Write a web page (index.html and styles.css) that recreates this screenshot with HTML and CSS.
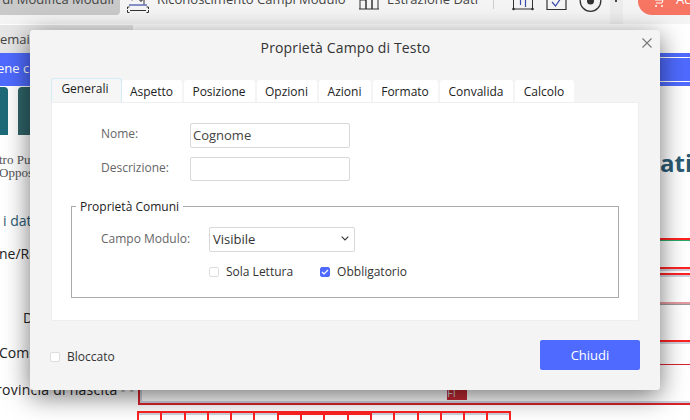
FILE: index.html
```html
<!DOCTYPE html>
<html lang="it">
<head>
<meta charset="utf-8">
<title>Proprietà Campo di Testo</title>
<link rel="stylesheet" href="styles.css">
</head>
<body>
<div class="app">
  <header class="toolbar">
    <div class="tool tool-active">di Modifica Moduli</div>
    <div class="tool tool-recog">
      <svg class="ticon" width="22" height="24" viewBox="0 0 22 24"><path d="M5 9.500V5h12v8.500M8 8h3M13 7h2v3h-2z" fill="none" stroke="#333"/><path d="M2 14h18" stroke="#3a4aa8" stroke-width="1.200"/><path d="M.5 18v-2h2M19.500 16h2v2M.5 19v2.500h2M19.500 21.500h2V19M3 19.500h16" fill="none" stroke="#333"/></svg>
      <span>Riconoscimento Campi Modulo</span>
    </div>
    <div class="tool tool-extract">
      <svg class="ticon" width="20" height="24" viewBox="0 0 20 24"><path d="M1 18V9h6v9M7 18V4h6v14M13 18V8h6v10M0 18h20" fill="none" stroke="#333"/></svg>
      <span>Estrazione Dati</span>
    </div>
    <div class="divider"></div>
    <svg class="sicon" width="22" height="24" viewBox="0 0 22 24"><path d="M1.500 2v16h19V2" fill="none" stroke="#333"/><circle cx="1.500" cy="18" r="1.300" fill="#333"/><circle cx="20.500" cy="18" r="1.300" fill="#333"/><path d="M8.500 6v8M13.500 8v8" stroke="#3a4aa8" stroke-width="1.200"/></svg>
    <svg class="sicon" width="21" height="24" viewBox="0 0 21 24"><path d="M1 2v16.500h19V2" fill="none" stroke="#333" stroke-width="1.200"/><path d="M6 11l3.500 4L15 7" fill="none" stroke="#3a4aa8" stroke-width="1.200"/></svg>
    <svg class="sicon last" width="23" height="24" viewBox="0 0 23 24"><circle cx="11.500" cy="10" r="10.300" fill="none" stroke="#333" stroke-width="1.300"/><circle cx="11.500" cy="10" r="3.500" fill="#333"/></svg>
    <div class="more"><span class="dot"></span></div>
    <div class="cta">
      <svg class="cart" width="10" height="8" viewBox="0 0 10 8"><path d="M1 0h8l-1 3H2" fill="none" stroke="#fff"/><circle cx="2" cy="6" r="1" fill="#fff"/><circle cx="8" cy="6" r="1" fill="#fff"/></svg>
      <span>Ac</span>
    </div>
  </header>

  <div class="doc" aria-hidden="true">
    <div class="frag email">email</div>
    <div class="banner"><span class="banner-text">ene c</span></div>
    <div class="logo l1"></div>
    <div class="logo l2"></div>
    <div class="frag serif s1">tro Pu</div>
    <div class="frag serif s2">Oppos</div>
    <div class="frag teal t1">i dat</div>
    <div class="frag lab f1">ne/Ra</div>
    <div class="frag lab f2">D</div>
    <div class="frag lab f3">Comu</div>
    <div class="frag lab f4">rovincia di nascita<span class="req"> * *</span></div>
    <div class="frag ati">ati</div>
    <div class="rline g r1"></div>
    <div class="rline r2"></div>
    <div class="rline r3"></div>
    <div class="rline p r4"></div>
    <div class="rline r5"></div>
    <div class="rline r6"></div>
    <div class="rline r7"></div>
    <div class="pbox"></div>
    <div class="pin">FI</div>
    <div class="cells">
      <i></i><i></i><i></i><i></i><i></i><i></i><i class="b"></i><i class="b"></i><i class="b"></i><i class="b"></i><i></i><i></i><i></i><i></i><i></i><i></i>
    </div>
  </div>

  <section class="modal">
    <div class="modal-head">
      <h1>Proprietà Campo di Testo</h1>
      <svg class="close" width="10" height="10" viewBox="0 0 10 10"><path d="M.5.500l9 9M9.500.500l-9 9" stroke="#777" stroke-width="1.100"/></svg>
    </div>
    <nav class="tabs">
      <div class="tab active">Generali</div>
      <div class="tab w60">Aspetto</div>
      <div class="tab w71">Posizione</div>
      <div class="tab w60">Opzioni</div>
      <div class="tab w52">Azioni</div>
      <div class="tab w65">Formato</div>
      <div class="tab w73">Convalida</div>
      <div class="tab w59">Calcolo</div>
    </nav>
    <div class="panel">
      <div class="row row-name">
        <label class="lbl">Nome:</label>
        <div class="input">Cognome</div>
      </div>
      <div class="row row-desc">
        <label class="lbl">Descrizione:</label>
        <div class="input short"></div>
      </div>
      <fieldset class="group">
        <legend>Proprietà Comuni</legend>
        <div class="row row-field">
          <label class="lbl lbl-field">Campo Modulo:</label>
          <div class="select">
            <span>Visibile</span>
            <svg width="8" height="5" viewBox="0 0 8 5"><path d="M.7.700L4 4l3.300-3.300" fill="none" stroke="#333" stroke-width="1.100"/></svg>
          </div>
        </div>
        <div class="row row-checks">
          <label class="check"><span class="box"></span>Sola Lettura</label>
          <label class="check check-on"><span class="box on"><svg width="8" height="6" viewBox="0 0 8 6"><path d="M1 3l2 2 4-4" fill="none" stroke="#fff" stroke-width="1.100"/></svg></span>Obbligatorio</label>
        </div>
      </fieldset>
    </div>
    <div class="modal-foot">
      <label class="check"><span class="box"></span>Bloccato</label>
      <button class="btn">Chiudi</button>
    </div>
  </section>
</div>
</body>
</html>
```
FILE: styles.css
```css
* { box-sizing: border-box; }
html, body { margin: 0; padding: 0; }
body { width: 690px; height: 420px; overflow: hidden; background: #fff; font-family: "Open Sans", sans-serif; }
.app { position: relative; width: 690px; height: 420px; overflow: hidden; }

.toolbar { position: relative; height: 48px; margin-top: -24px; background: #f4f4f4; display: flex; align-items: flex-start; font-size: 13px; color: #444; }
.tool { display: flex; align-items: flex-start; height: 48px; white-space: nowrap; line-height: 46px; flex: none; }
.tool-active { width: 120px; height: 39px; background: #c9c9c9; border-radius: 0 0 4px 0; justify-content: flex-end; padding-right: 6px; }
.tool-recog { margin-left: 7px; width: 230px; }
.tool-recog span { margin-left: 8px; }
.tool-extract { margin-left: 2px; width: 132px; }
.tool-extract span { margin-left: 8px; }
.ticon { margin-top: 15px; flex: none; }
.divider { width: 1px; height: 33px; background: #ccc; margin-left: 2px; margin-right: 18px; flex: none; }
.sicon { margin-top: 15px; margin-right: 12px; flex: none; }
.sicon.last { margin-right: 8px; }
.more { width: 13px; height: 48px; background: #ececec; position: relative; flex: none; }
.dot { position: absolute; left: 5px; top: 24px; width: 2px; height: 2px; background: #444; }
.cta { width: 80px; height: 39px; background: #f77563; border-radius: 0 0 0 14px; margin-left: 15px; color: #fff; position: relative; padding-left: 38px; line-height: 46px; flex: none; }
.cart { position: absolute; left: 16px; top: 24px; }

.doc { position: absolute; left: 0; top: 24px; right: 0; bottom: 0; background: #fff; }
.frag { position: absolute; white-space: nowrap; }
.email { left: -4px; top: 1px; font-size: 13px; color: #444; background: #e6e6e6; padding: 0 100px 0 4px; line-height: 28px; }
.banner { position: absolute; left: 0; right: 0; top: 29px; height: 33px; background: #4f6bff; }
.banner::after { content: ""; position: absolute; left: 660px; right: 0; top: 4px; height: 23px; border-top: 1px solid #fff; border-bottom: 1px solid #fff; }
.banner-text { position: absolute; left: -3px; top: 6px; color: #fff; font-size: 13px; }
.logo { position: absolute; top: 63px; height: 48px; background: #1e6a78; border-radius: 4px 4px 0 0; }
.l1 { left: -4px; width: 12px; }
.l2 { left: 18px; width: 24px; background: #2f6468; }
.serif { font-family: "Liberation Serif", serif; font-size: 13px; line-height: 12px; color: #555; }
.s1 { left: -1px; top: 130px; }
.s2 { left: -1px; top: 143px; }
.teal { color: #2a5b74; font-size: 14px; }
.t1 { left: 3px; top: 187px; }
.lab { color: #222; font-size: 14px; }
.f1 { left: -1px; top: 220px; }
.f2 { left: 23px; top: 284px; }
.f3 { left: -1px; top: 319px; }
.f4 { left: -4px; top: 356px; letter-spacing: .25px; }
.req { font-size: 10px; color: #888; }
.ati { left: 660px; top: 122px; color: #2a5b74; font-size: 24px; font-weight: 700; }
.rline { position: absolute; left: 660px; right: 0; height: 2px; background: #f22; box-shadow: 0 2px 0 #cfd2dc; }
.rline.g { box-shadow: 0 1px 0 #2aa868; }
.rline.p { background: #e39aa0; box-shadow: 0 1px 0 #999; }
.r1 { top: 214px; }
.r2 { top: 243px; }
.r3 { top: 249px; }
.r4 { top: 278px; }
.r5 { top: 316px; }
.r6 { top: 344px; }
.r7 { top: 351px; }
.pbox { position: absolute; left: 138px; right: -2px; top: 340px; height: 41px; background: #fff; border: 1px solid #d8232c; border-width: 1px 1px 2px 2px; box-shadow: inset 2px 0 0 #cfd2dc, inset 0 -2px 0 #cfd2dc; }
.pin { position: absolute; left: 447px; top: 364px; width: 20px; height: 12px; background: #c22a34; color: #ddd; font-size: 11px; line-height: 9px; }
.cells { position: absolute; left: 137px; top: 387px; display: flex; height: 20px; border-top: 2px solid #f22; box-shadow: inset 0 2px 0 #cfd2dc; }
.cells i { width: 23.300px; height: 20px; border-left: 2px solid #f22; }
.cells i:last-child { width: 25px; border-right: 2px solid #f22; }
.cells i.b { box-shadow: inset 0 8px 0 -6px #f22; }

.modal { position: absolute; left: 30px; top: 30px; width: 630px; height: 360px; background: #f4f4f4; border-radius: 3px; box-shadow: 0 6px 26px rgba(0,0,0,.55); display: flex; flex-direction: column; padding: 0 20px 0 21px; }
.modal-head { height: 48px; position: relative; flex: none; }
.modal-head h1 { margin: 0; padding: 8px 0 0; text-align: center; font-size: 14px; line-height: 20px; font-weight: 400; color: #333; letter-spacing: .15px; }
.close { position: absolute; right: -12px; top: 8px; }

.tabs { display: flex; align-items: flex-end; height: 24px; gap: 2px; flex: none; font-size: 12px; color: #222; }
.tab { height: 22px; background: #fff; border-radius: 3px 3px 0 0; text-align: center; line-height: 24px; flex: none; padding-right: 1px; }
.tab.active { width: 71px; height: 24px; line-height: 20px; background: #f6f6f6; border: 1px solid #d3ecf6; border-bottom: 0; margin-right: -2px; padding-right: 3px; }
.w60 { width: 60px; }
.w71 { width: 71px; }
.w52 { width: 52px; }
.w65 { width: 65px; }
.w73 { width: 73px; }
.w59 { width: 59px; }

.panel { width: 588px; height: 219px; background: #fff; border: 1px solid #eee; padding: 20px 19px 0; flex: none; font-size: 12px; }
.row { display: flex; }
.lbl { color: #666; width: 89px; margin-left: 30px; flex: none; line-height: 22px; }
.input { width: 160px; height: 25px; border: 1px solid #d9d9d9; border-radius: 2px; padding-left: 2px; font-size: 13px; line-height: 23px; color: #444; }
.input.short { height: 24px; }
.row-desc { margin-top: 9px; }
.group { margin: 16px 0 0; width: 548px; height: 101px; border: 1px solid #aaa; padding: 12px 0 0 29px; min-width: 0; position: relative; }
.group legend { padding: 2px 4px 0; margin-left: -25px; font-size: 12px; line-height: 16px; color: #222; }
.lbl-field { margin-left: 0; width: 108px; padding-top: 1px; }
.select { width: 146px; height: 25px; border: 1px solid #d9d9d9; border-radius: 2px; display: flex; align-items: center; justify-content: space-between; padding: 0 5px 2px 3px; font-size: 13px; color: #333; }
.row-checks { margin: 12px 0 0 108px; }
.check { display: flex; align-items: center; font-size: 12px; color: #333; line-height: 16px; }
.check-on { margin-left: 27px; }
.box { width: 10px; height: 10px; border: 1px solid #ddd; border-radius: 2px; margin-right: 7px; background: #fff; flex: none; display: flex; align-items: center; justify-content: center; }
.box.on { background: #4f6bff; border-color: #4f6bff; }
.modal-foot { flex: 1; display: flex; align-items: flex-start; justify-content: space-between; padding-top: 19px; margin-left: -1px; }
.modal-foot .check { margin-top: 9px; }
.btn { width: 100px; height: 30px; background: #4f6bff; color: #fff; border: 0; border-radius: 2px; font: 13px "Open Sans", sans-serif; padding: 0; }
```
